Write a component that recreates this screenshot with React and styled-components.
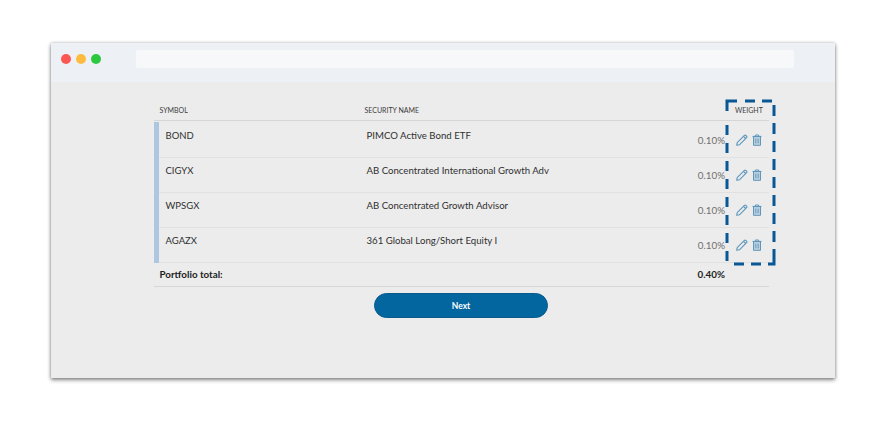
import React from "react";
import styled, { createGlobalStyle } from "styled-components";

const holdings = [
  { symbol: "BOND", name: "PIMCO Active Bond ETF", height: 36, lead: 1 },
  { symbol: "CIGYX", name: "AB Concentrated International Growth Adv", height: 35, lead: 0 },
  { symbol: "WPSGX", name: "AB Concentrated Growth Advisor", height: 35, lead: 0 },
  { symbol: "AGAZX", name: "361 Global Long/Short Equity I", height: 35, lead: 0 },
];

const GlobalStyle = createGlobalStyle`
  html, body {
    margin: 0;
    background: #fff;
    font-family: "Lato", "Noto Sans", sans-serif;
  }
`;

const Page = styled.div`
  width: 885px;
  height: 432px;
  padding: 43px 50px 0 51px;
  box-sizing: border-box;
  overflow: hidden;
`;

const BrowserWindow = styled.div`
  position: relative;
  width: 784px;
  height: 335px;
  background: #ececec;
  box-shadow: 0 2px 4px rgba(0, 0, 0, 0.45), 0 0 3px rgba(0, 0, 0, 0.22);
`;

const TitleBar = styled.div`
  display: flex;
  align-items: center;
  height: 39px;
  padding: 0 41px 7px 10px;
  box-sizing: border-box;
  background: #edf0f4;
`;

const Light = styled.span`
  width: 10px;
  height: 10px;
  margin-right: 5px;
  border-radius: 50%;
  background: ${(p) => p.$color};
`;

const AddressBar = styled.div`
  flex: 1;
  height: 18px;
  margin-left: 30px;
  border-radius: 2px;
  background: #f6f8fa;
`;

const Content = styled.div`
  width: 615px;
  margin-left: 103px;
`;

const HeaderRow = styled.div`
  display: flex;
  align-items: center;
  height: 39px;
  padding-top: 18px;
  box-sizing: border-box;
  border-bottom: 1px solid #d6d6d6;
  font-size: 7px;
  color: #3c3c3c;
`;

const SymbolHead = styled.span`
  width: 210.5px;
  padding-left: 5.5px;
  box-sizing: border-box;
`;

const NameHead = styled.span`
  width: 370.5px;
`;

const Rows = styled.div`
  margin-top: 1px;
  border-left: 5px solid #adc7e0;
`;

const Row = styled.div`
  display: flex;
  height: ${(p) => p.$height}px;
  padding-top: ${(p) => p.$lead}px;
  box-sizing: border-box;
  border-bottom: 1px solid #e1e1e1;
`;

const SymbolCell = styled.div`
  width: 207.5px;
  padding: 6px 0 0 6.5px;
  box-sizing: border-box;
  font-size: 9.5px;
  line-height: 13px;
  color: #303030;
`;

const NameCell = styled.div`
  width: 326.5px;
  padding-top: 6px;
  font-size: 9.65px;
  line-height: 13px;
  color: #303030;
`;

const WeightCell = styled.div`
  width: 32px;
  padding-top: 11px;
  font-size: 9.8px;
  line-height: 13px;
  text-align: right;
  color: #6f6f6f;
  box-sizing: border-box;
`;

const Actions = styled.div`
  display: flex;
  gap: 4px;
  padding: 11px 0 0 11px;
  color: #5d97bd;
`;

const TotalRow = styled.div`
  display: flex;
  align-items: center;
  height: 24px;
  padding: 0 0 1px 5.5px;
  border-bottom: 1px solid #d6d6d6;
  box-sizing: border-box;
  font-size: 9.8px;
  font-weight: 700;
  color: #1c1c1c;
`;

const TotalLabel = styled.span`
  width: 530.5px;
`;

const TotalValue = styled.span`
  width: 35px;
  text-align: right;
`;

const Footer = styled.div`
  display: flex;
  justify-content: center;
  margin-top: 6px;
  padding-right: 2px;
`;

const NextButton = styled.button`
  width: 174px;
  height: 25px;
  padding: 0 0 0 1px;
  border: 1px solid #0a5a8c;
  border-radius: 13px;
  background: #03669f;
  font-family: inherit;
  font-size: 8.5px;
  font-weight: 700;
  color: #fff;
`;

const Callout = styled.svg`
  position: absolute;
  left: 674px;
  top: 56px;
  width: 52px;
  height: 168px;
`;

const PencilIcon = () => (
  <svg width="12" height="12" viewBox="0 0 12 12" fill="none" stroke="currentColor" strokeWidth="1.1" strokeLinejoin="round">
    <path d="M1.2 8.6 8.4 1.4a1 1 0 0 1 1.4 0l.8.8a1 1 0 0 1 0 1.4L3.4 10.8.7 11.3z" />
    <path d="M7.5 2.3 9.7 4.5" />
  </svg>
);

const TrashIcon = () => (
  <svg width="10" height="12" viewBox="0 0 10 12" fill="none" stroke="currentColor" strokeWidth="1">
    <path d="M.5 2.4h9M3.4 2.3V1h3.2v1.3" />
    <path d="M1.5 2.6v8.7h7V2.6z" fill="#5d97bd" fillOpacity="0.3" />
    <path d="M3.4 4.6v4.8M5 4.6v4.8M6.6 4.6v4.8" strokeWidth="0.7" />
  </svg>
);

export default function App() {
  return (
    <Page>
      <GlobalStyle />
      <BrowserWindow>
        <TitleBar>
          <Light $color="#fc5753" />
          <Light $color="#fdbc40" />
          <Light $color="#2bc840" />
          <AddressBar />
        </TitleBar>
        <Content>
          <HeaderRow>
            <SymbolHead>SYMBOL</SymbolHead>
            <NameHead>SECURITY NAME</NameHead>
            <span>WEIGHT</span>
          </HeaderRow>
          <Rows>
            {holdings.map((h) => (
              <Row key={h.symbol} $height={h.height} $lead={h.lead}>
                <SymbolCell>{h.symbol}</SymbolCell>
                <NameCell>{h.name}</NameCell>
                <WeightCell>0.10%</WeightCell>
                <Actions>
                  <PencilIcon />
                  <TrashIcon />
                </Actions>
              </Row>
            ))}
          </Rows>
          <TotalRow>
            <TotalLabel>Portfolio total:</TotalLabel>
            <TotalValue>0.40%</TotalValue>
          </TotalRow>
          <Footer>
            <NextButton>Next</NextButton>
          </Footer>
        </Content>
        <Callout viewBox="0 0 52 168">
          <path
            d="M2 12V2H12M20 2H30M37 2H47M49 6V17M49 24V35M49 42V53M49 60V71M49 78V89M49 96V107M49 114V125M49 132V143M49 150V165H43M36 165H26M19 165H9M2 162V152M2 144V134M2 126V116M2 108V98M2 90V80M2 72V62M2 54V44M2 36V26"
            fill="none"
            stroke="#0a5796"
            strokeWidth="3"
          />
        </Callout>
      </BrowserWindow>
    </Page>
  );
}
